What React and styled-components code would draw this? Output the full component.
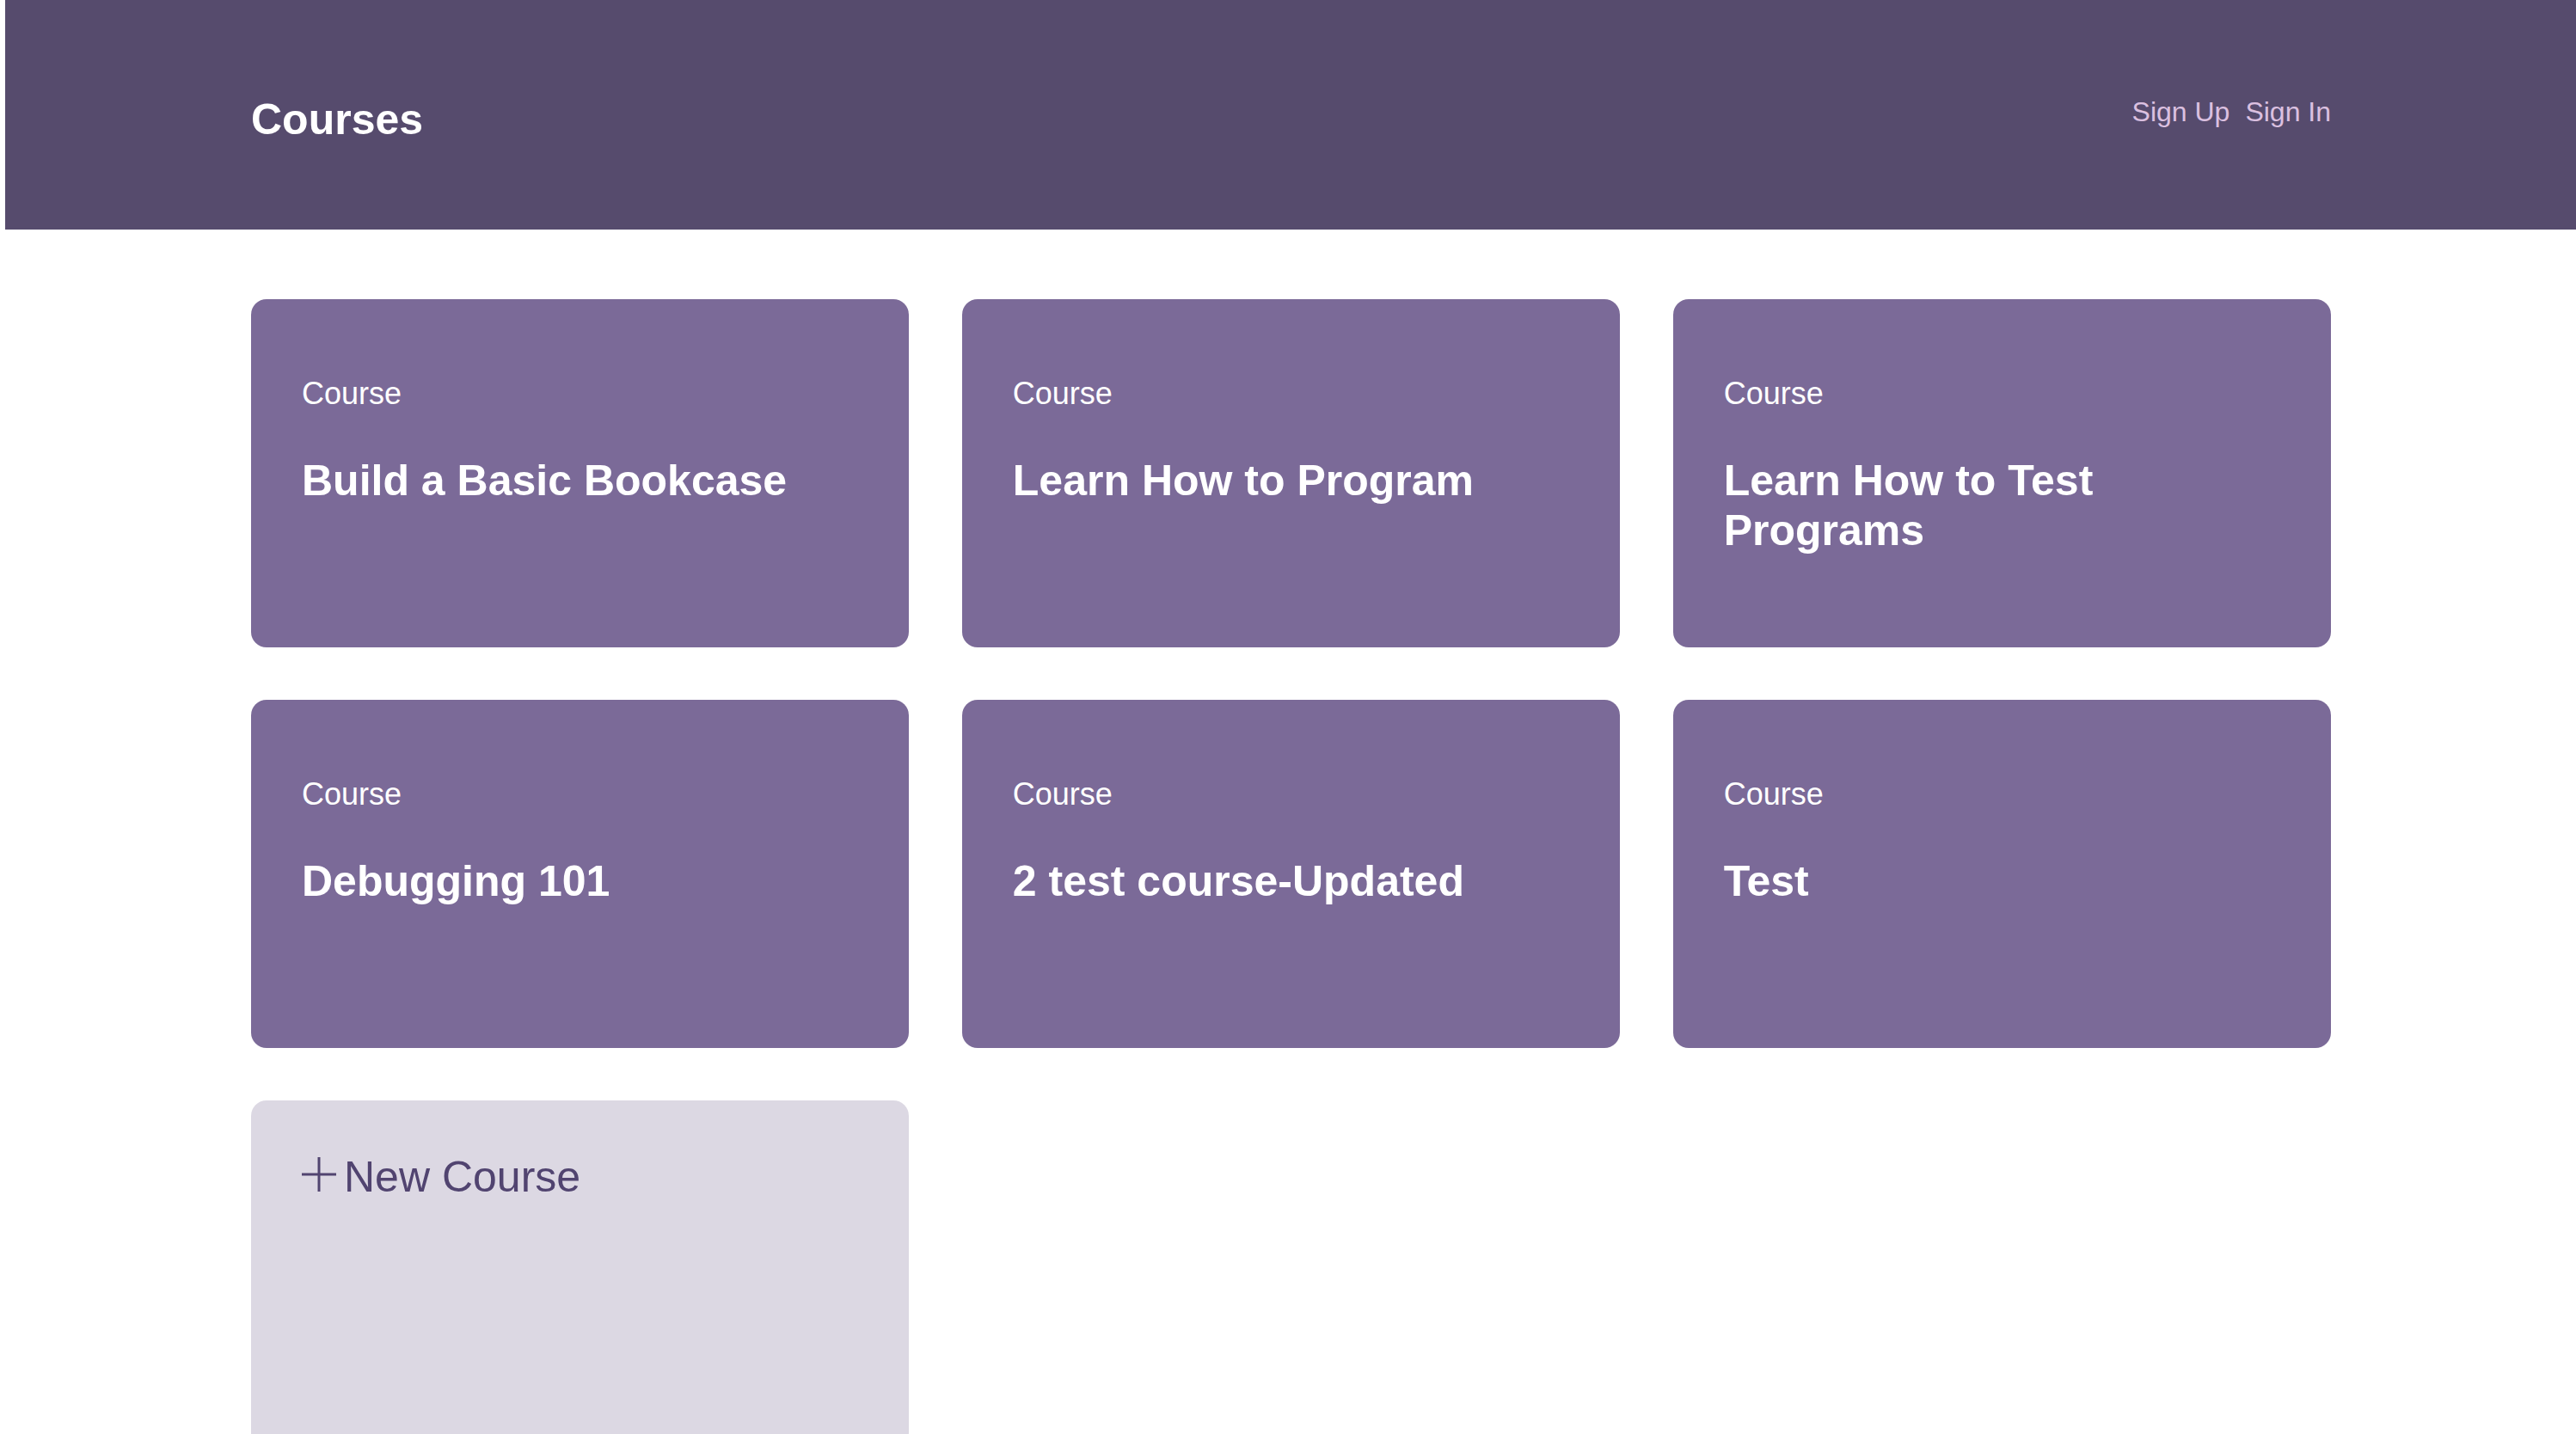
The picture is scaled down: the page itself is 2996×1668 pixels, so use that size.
import React from 'react'
import styled, { createGlobalStyle } from 'styled-components'

const courses = [
  'Build a Basic Bookcase',
  'Learn How to Program',
  'Learn How to Test Programs',
  'Debugging 101',
  '2 test course-Updated',
  'Test',
]

const App = () => {
  return (
    <>
      <GlobalStyle />
      <Page>
        <Header>
          <HeaderInner>
            <Logo>Courses</Logo>
            <Nav>
              <NavLink href="#">Sign Up</NavLink>
              <NavLink href="#">Sign In</NavLink>
            </Nav>
          </HeaderInner>
        </Header>
        <Main>
          {courses.map((title) => (
            <CourseCard key={title} href="#">
              <CardLabel>Course</CardLabel>
              <CardTitle>{title}</CardTitle>
            </CourseCard>
          ))}
          <NewCourseCard href="#">
            <NewCourseText>
              <PlusIcon viewBox="0 0 40 40">
                <path d="M20 0 V40 M0 20 H40" stroke="currentColor" strokeWidth="3" fill="none" />
              </PlusIcon>
              New Course
            </NewCourseText>
          </NewCourseCard>
        </Main>
      </Page>
    </>
  )
}

const GlobalStyle = createGlobalStyle`
  html, body {
    margin: 0;
    padding: 0;
    background: #ffffff;
  }
  body {
    font-family: "Liberation Sans", Arial, sans-serif;
  }
  * {
    box-sizing: border-box;
  }
`

const Page = styled.div`
  margin-left: 6px;
`

const Header = styled.header`
  background-color: #564b6d;
  height: 267px;
`

const HeaderInner = styled.div`
  width: 2420px;
  margin: 0 auto;
  padding-top: 110px;
  padding-left: 1px;
  display: flex;
  justify-content: space-between;
  align-items: flex-start;
`

const Logo = styled.h1`
  margin: 0;
  font-size: 50px;
  font-weight: 700;
  color: #ffffff;
`

const Nav = styled.nav`
  display: flex;
  gap: 18px;
  margin-top: 2px;
`

const NavLink = styled.a`
  font-size: 32px;
  color: #dbc0e0;
  text-decoration: none;
`

const Main = styled.main`
  width: 2420px;
  margin: 81px auto 0;
  padding-left: 1px;
  display: grid;
  grid-template-columns: repeat(3, 1fr);
  grid-auto-rows: 405px;
  gap: 61px 61.5px;
`

const CourseCard = styled.a`
  display: block;
  background-color: #7b6a98;
  border-radius: 18px;
  padding: 89px 60px 0 59px;
  text-decoration: none;
  color: #ffffff;
`

const CardLabel = styled.h4`
  margin: 0;
  font-size: 36px;
  font-weight: 400;
`

const CardTitle = styled.h3`
  margin: 51px 0 0;
  font-size: 50px;
  font-weight: 700;
`

const NewCourseCard = styled.a`
  display: block;
  background-color: #dcd8e3;
  border-radius: 18px;
  padding: 60px 60px 0 59px;
  text-decoration: none;
  color: #514470;
`

const NewCourseText = styled.h3`
  margin: 0;
  font-size: 50px;
  font-weight: 400;
`

const PlusIcon = styled.svg`
  width: 40px;
  height: 40px;
  margin-right: 9px;
  vertical-align: baseline;
`

export default App
